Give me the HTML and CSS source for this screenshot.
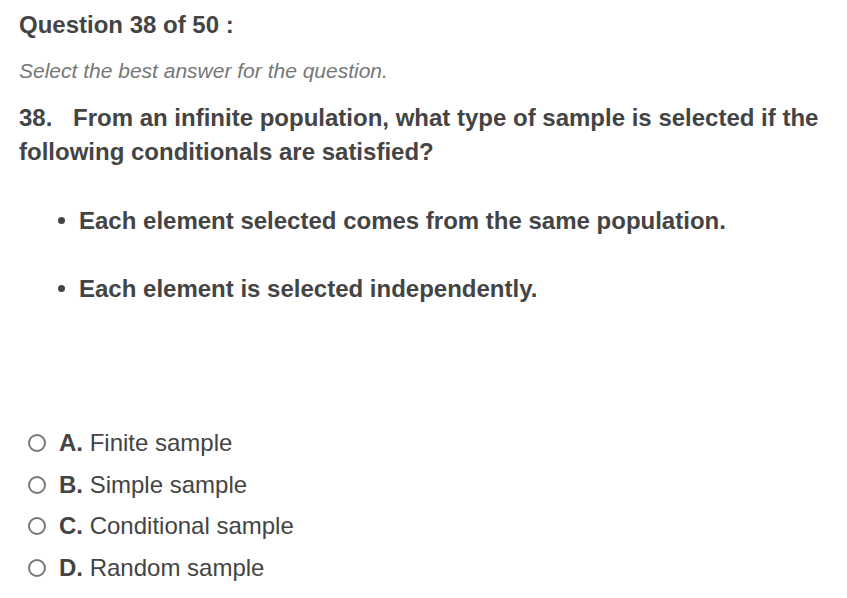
FILE: index.html
```html
<!DOCTYPE html>
<html lang="en">
<head>
<meta charset="utf-8">
<title>Question 38 of 50</title>
<link rel="stylesheet" href="styles.css">
</head>
<body>
<main class="quiz">
  <h1 class="q-title">Question 38 of 50 :</h1>
  <p class="q-hint">Select the best answer for the question.</p>
  <p class="q-text"><span class="q-num">38.</span>From an infinite population, what type of sample is selected if the following conditionals are satisfied?</p>
  <ul class="q-conds">
    <li>Each element selected comes from the same population.</li>
    <li>Each element is selected independently.</li>
  </ul>
  <ul class="options">
    <li class="option"><span class="radio"></span><span class="opt-label"><b>A.</b> Finite sample</span></li>
    <li class="option"><span class="radio"></span><span class="opt-label"><b>B.</b> Simple sample</span></li>
    <li class="option"><span class="radio"></span><span class="opt-label"><b>C.</b> Conditional sample</span></li>
    <li class="option"><span class="radio"></span><span class="opt-label"><b>D.</b> Random sample</span></li>
  </ul>
</main>
</body>
</html>
```

FILE: styles.css
```css
html, body {
  margin: 0;
  padding: 0;
  background: #ffffff;
}

body {
  font-family: "Liberation Sans", Arial, sans-serif;
  color: #444444;
}

.quiz {
  padding: 11px 19px 0 19px;
}

.q-title {
  margin: 0;
  font-size: 24px;
  line-height: 28px;
  font-weight: bold;
}

.q-hint {
  margin: 20px 0 0 0;
  font-size: 21px;
  line-height: 24px;
  font-style: italic;
  color: #777777;
}

.q-text {
  margin: 18px 0 0 0;
  font-size: 24px;
  line-height: 34px;
  font-weight: bold;
}

.q-num {
  display: inline-block;
  width: 54px;
}

.q-conds {
  margin: 35px 0 0 0;
  padding: 0 0 0 60px;
  list-style: none;
  font-size: 24px;
  line-height: 34px;
  font-weight: bold;
}

.q-conds li {
  position: relative;
  margin-bottom: 34px;
}

.q-conds li:last-child {
  margin-bottom: 0;
}

.q-conds li::before {
  content: "";
  position: absolute;
  left: -21px;
  top: 13px;
  width: 7px;
  height: 7px;
  border-radius: 50%;
  background: #444444;
}

.options {
  margin: 116px 0 0 0;
  padding: 0;
  list-style: none;
  font-size: 24px;
  line-height: 41.67px;
}

.option {
  display: flex;
  align-items: center;
}

.radio {
  box-sizing: border-box;
  width: 18px;
  height: 18px;
  border: 2px solid #777777;
  border-radius: 50%;
  margin: 0 13px 0 9px;
  flex: none;
}

.opt-label b {
  font-weight: bold;
}
```
